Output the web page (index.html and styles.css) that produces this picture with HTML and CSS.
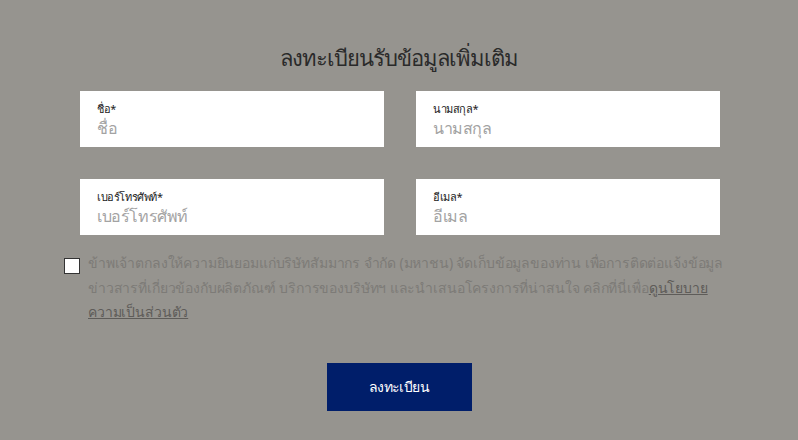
FILE: index.html
```html
<!DOCTYPE html>
<html lang="th">
<head>
    <meta charset="UTF-8">
    <meta name="viewport" content="width=device-width, initial-scale=1">
    <title>ลงทะเบียน</title>
    <link rel="stylesheet" href="styles.css">
</head>
<body>
    <section class="register">
        <h2 class="register-title">ลงทะเบียนรับข้อมูลเพิ่มเติม</h2>
        <form class="register-form">
            <div class="field-grid">
                <label class="field">
                    <span class="field-label">ชื่อ*</span>
                    <input class="field-input" type="text" placeholder="ชื่อ">
                </label>
                <label class="field">
                    <span class="field-label">นามสกุล*</span>
                    <input class="field-input" type="text" placeholder="นามสกุล">
                </label>
                <label class="field">
                    <span class="field-label">เบอร์โทรศัพท์*</span>
                    <input class="field-input" type="tel" placeholder="เบอร์โทรศัพท์">
                </label>
                <label class="field">
                    <span class="field-label">อีเมล*</span>
                    <input class="field-input" type="email" placeholder="อีเมล">
                </label>
            </div>
            <div class="consent">
                <span class="consent-box"></span>
                <p class="consent-text">
                    ข้าพเจ้าตกลงให้ความยินยอมแก่บริษัทสัมมากร จำกัด (มหาชน) จัดเก็บข้อมูลของท่าน เพื่อการติดต่อแจ้งข้อมูล<br>ข่าวสารที่เกี่ยวข้องกับผลิตภัณฑ์ บริการของบริษัทฯ และนำเสนอโครงการที่น่าสนใจ คลิกที่นี่เพื่อ<a href="#">ดูนโยบาย<br>ความเป็นส่วนตัว</a>
                </p>
            </div>
            <div class="actions">
                <button class="submit" type="button">ลงทะเบียน</button>
            </div>
        </form>
    </section>
</body>
</html>
```

FILE: styles.css
```css
body {
    margin: 0;
    background: #96948f;
    font-family: "Noto Sans", "DejaVu Sans", sans-serif;
}
.register {
    width: 798px;
    height: 440px;
    padding-top: 41px;
    box-sizing: border-box;
}
.register-title {
    margin: 0 0 18px;
    text-align: center;
    font-size: 22px;
    font-weight: 400;
    line-height: 32px;
    letter-spacing: -1px;
    color: #2a2a2a;
}
.register-form {
    padding: 0 60px 0 64px;
}
.field-grid {
    display: grid;
    grid-template-columns: 304px 304px;
    column-gap: 32px;
    row-gap: 32px;
    padding-left: 16px;
}
.field {
    display: flex;
    flex-direction: column;
    height: 56px;
    box-sizing: border-box;
    padding: 11px 17px 0;
    background: #fff;
}
.field-label {
    font-size: 11px;
    line-height: 14px;
    letter-spacing: -0.4px;
    color: #222;
}
.field-input {
    border: 0;
    padding: 0;
    margin: 0;
    outline: none;
    font: inherit;
    font-size: 16px;
    line-height: 24px;
    letter-spacing: -0.4px;
    color: #333;
    background: transparent;
}
.field-input::placeholder {
    color: #a3a3a3;
}
.consent {
    display: flex;
    gap: 8px;
    margin-top: 16px;
}
.consent-box {
    flex: none;
    width: 14px;
    height: 14px;
    margin-top: 7px;
    border: 1px solid #333;
    background: #fff;
}
.consent-text {
    margin: 0;
    font-size: 14px;
    line-height: 24.5px;
    letter-spacing: -0.15px;
    white-space: nowrap;
    color: #7d7b77;
}
.consent-text a {
    color: #5e5c59;
}
.actions {
    display: flex;
    justify-content: center;
    margin: 38px -60px 0 -64px;
}
.submit {
    width: 145px;
    height: 48px;
    border: 0;
    background: #001e6a;
    color: #fff;
    font: inherit;
    font-size: 14px;
    letter-spacing: -0.6px;
}
```
